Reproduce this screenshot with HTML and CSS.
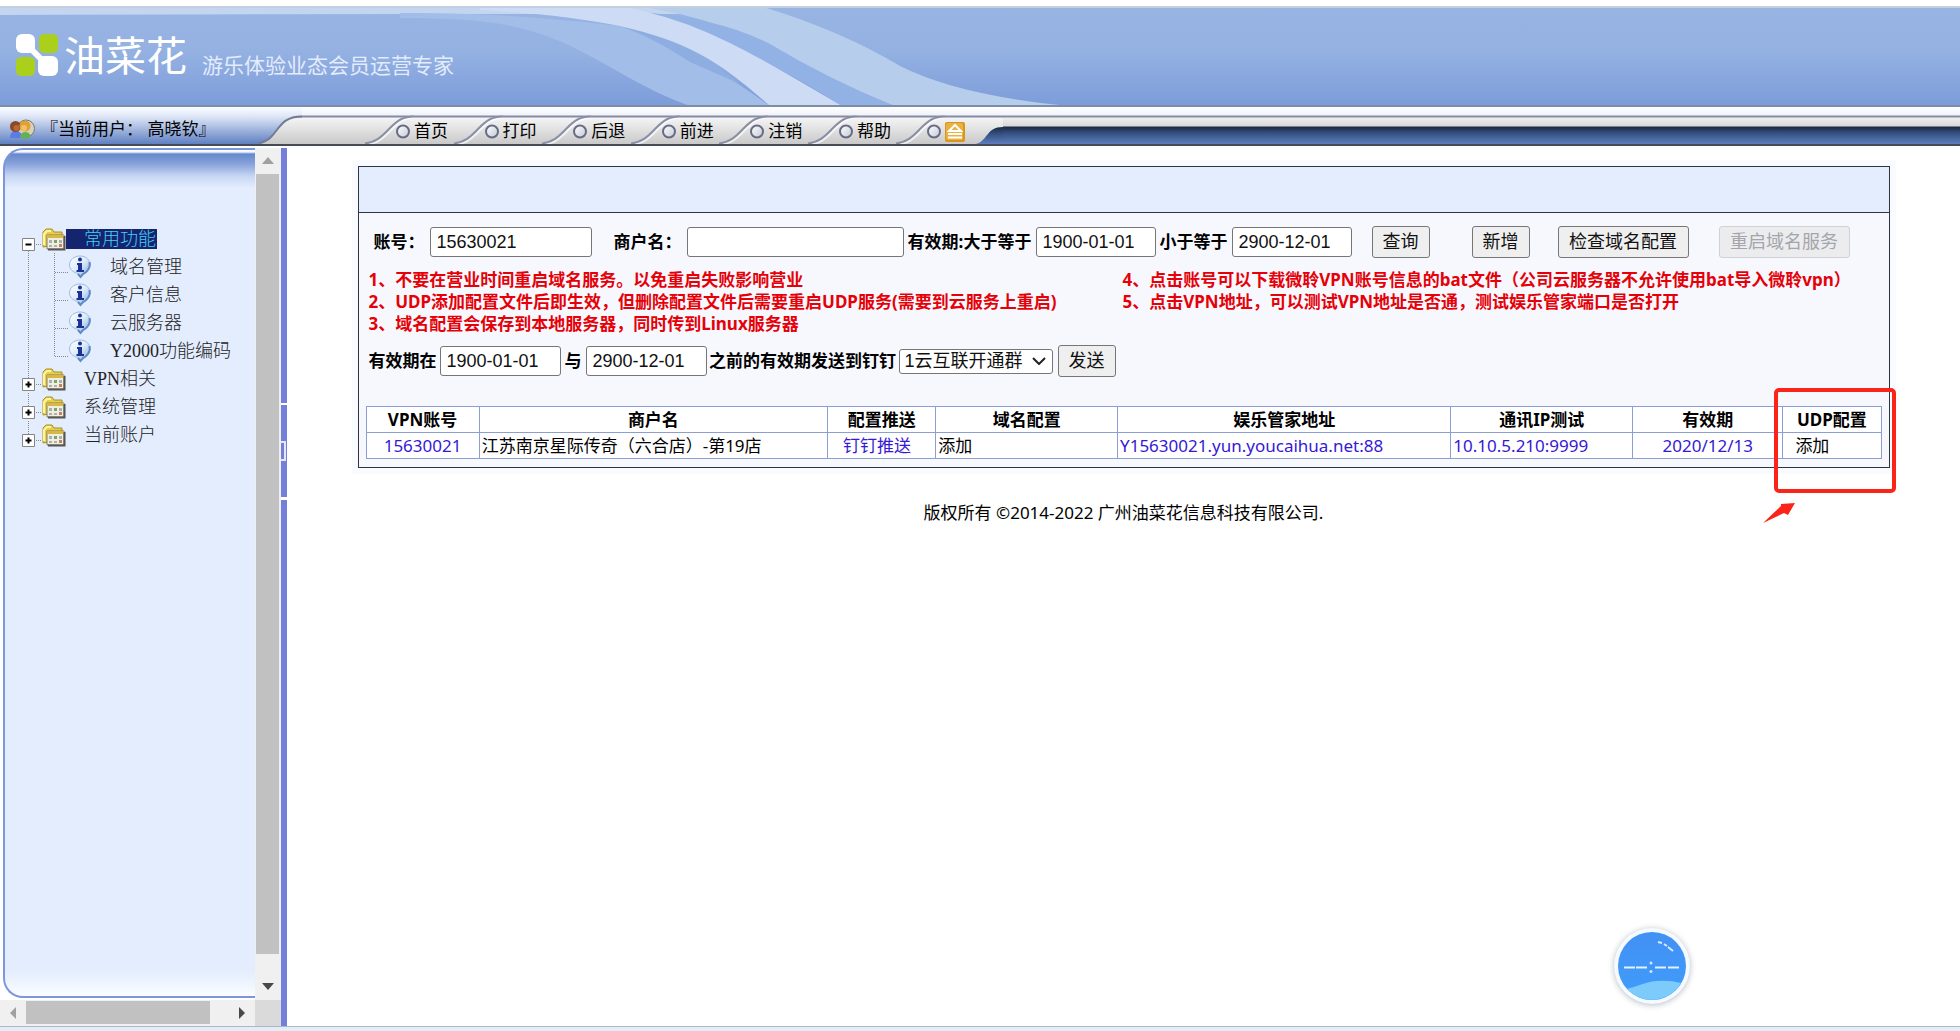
FILE: index.html
```html
<!DOCTYPE html>
<html lang="zh-CN">
<head>
<meta charset="utf-8">
<title>油菜花</title>
<link rel="stylesheet" href="styles.css">
</head>
<body>
<svg class="defs" width="0" height="0" aria-hidden="true">
  <defs>
    <linearGradient id="userBlue" x1="0" y1="0" x2="0" y2="37" gradientUnits="userSpaceOnUse"><stop offset="0" stop-color="#fbfcff"/><stop offset=".25" stop-color="#dfe7f6"/><stop offset=".6" stop-color="#a3b7de"/><stop offset="1" stop-color="#5f80c2"/></linearGradient>
    <linearGradient id="navy" x1="0" y1="0" x2="0" y2="1"><stop offset="0" stop-color="#1b2942"/><stop offset=".4" stop-color="#34507f"/><stop offset="1" stop-color="#5d7dbf"/></linearGradient>
    <linearGradient id="ball" x1="0" y1="0" x2="1" y2="1"><stop offset="0" stop-color="#fff"/><stop offset="1" stop-color="#c3c8d6"/></linearGradient>
    <linearGradient id="bubble" x1="0" y1="0" x2="1" y2="1"><stop offset="0" stop-color="#fff"/><stop offset=".5" stop-color="#dcebfa"/><stop offset="1" stop-color="#7fa6d8"/></linearGradient>
    <linearGradient id="water" x1="0" y1="0" x2="0" y2="1"><stop offset="0" stop-color="#4290f3"/><stop offset="1" stop-color="#3f9dfc"/></linearGradient>
    <symbol id="tab" viewBox="0 0 49 37"><path d="M0 36.500C12 35 17 29 25 21S38 9.500 50 9.500" fill="none" stroke="#fff" stroke-width="2" transform="translate(2 1)" opacity=".7"/><path d="M0 36.500C12 35 17 29 25 21S38 9.500 50 9.500" fill="none" stroke="#8a8fa6" stroke-width="2"/><circle cx="38" cy="24.500" r="6" fill="url(#ball)" stroke="#666c84" stroke-width="2"/></symbol>
    <symbol id="folder" viewBox="0 0 24 24"><path d="M1 20V5l3-3h6l2 3h8v12z" fill="#e8cf4a" stroke="#a8902c"/><path d="M2 18V7l3-3h4" fill="none" stroke="#fff3a0" stroke-width="2"/><path d="M5 8h17v14H5z" fill="#f0eedd" stroke="#7d7b58"/><path d="M5 8h17v3H5z" fill="#d9b64a"/><path d="M22.500 9v13.500H6" fill="none" stroke="#555" stroke-width="2"/><path d="M7 13h3v3H7zM12 13h3v3h-3zM17 13h3v3h-3zM7 18h3v2H7zM12 18h3v2h-3z" fill="#a9b0b8"/><path d="M12 13h3v3h-3z" fill="#74a868"/><path d="M17 17h3v3h-3z" fill="#cc7c68"/></symbol>
    <symbol id="info" viewBox="0 0 24 24"><path d="M12 1c6 0 10 4 10 9 0 4-3 7-7 8.500L12.500 22 9.500 18.500c-5-1.500-8-4.500-8-8.500C1.500 5 6 1 12 1z" fill="url(#bubble)" stroke="#9dbbe0"/><path d="M21.500 7c1.500 6-3 10.500-6.500 12l-2.500 3-2.500-3" fill="none" stroke="#5e8ac6" stroke-width="2"/><path d="M9 8h5v7h2v2H8.500v-2H10v-5H9z" fill="#1c3296"/><circle cx="12" cy="4.500" r="2" fill="#1c3296"/></symbol>
    <symbol id="minus" viewBox="0 0 24 28"><path d="M10.500 26v2M16 19.500h8" stroke="#888" stroke-dasharray="1 1"/><path d="M4.500 13.500h12v12h-12z" fill="#fff" stroke="#848484"/><path d="M7.500 19.500h6" stroke="#000" stroke-width="2"/></symbol>
    <symbol id="plus" viewBox="0 0 24 28"><path d="M10.500 0v13M16 19.500h8" stroke="#888" stroke-dasharray="1 1"/><path d="M4.500 13.500h12v12h-12z" fill="#fff" stroke="#848484"/><path d="M7.500 19.500h6M10.500 16.500v6" stroke="#000" stroke-width="2"/></symbol>
    <symbol id="trunk" viewBox="0 0 24 28"><path d="M10.500 0v28" stroke="#888" stroke-dasharray="1 1"/></symbol>
    <symbol id="branch" viewBox="0 0 26 28"><path d="M12.500 0v28M13 19.500h13" stroke="#888" stroke-dasharray="1 1"/></symbol>
    <symbol id="elbow" viewBox="0 0 26 28"><path d="M12.500 0v20M13 19.500h13" stroke="#888" stroke-dasharray="1 1"/></symbol>
  </defs>
</svg>

<header class="banner">
  <svg class="waves" viewBox="0 8 1200 97" width="1200" height="97" aria-hidden="true">
    <path d="M0 6H700V14H430Q200 14 0 15z" fill="#c4d5ef"/>
    <path d="M400 13Q500 12 620 26Q680 46 735 82Q755 95 770 106H690C640 88 610 64 562 42C520 24 480 18 400 18z" fill="#a2bde7"/>
    <path d="M622 27Q690 40 740 84L690 62Q650 36 622 27z" fill="#8eaee2"/>
    <path d="M640 6H760Q840 30 900 66Q960 96 1070 106H895Q850 92 800 66Q740 28 680 14z" fill="#b6cdec"/>
    <path d="M640 12Q720 18 770 44Q830 80 895 106H842Q740 40 640 12z" fill="#92b2e5"/>
    <path d="M480 6H620C700 22 740 46 842 106H770C720 62 690 42 620 26Q560 14 480 10z" fill="#cddcf4"/>
  </svg>
  <svg class="mark" viewBox="0 0 42 42" width="42" height="42" aria-hidden="true">
    <path d="M14 14L28 28" stroke="#fff" stroke-width="6"/>
    <rect width="19" height="19" rx="6" fill="#fff"/><rect x="23" width="19" height="19" rx="5" fill="#abd01b"/>
    <rect y="23" width="19" height="19" rx="5" fill="#abd01b"/><rect x="22" y="22" width="20" height="20" rx="6" fill="#fff"/>
  </svg>
  <span class="brand">油菜花</span>
  <span class="tagline">游乐体验业态会员运营专家</span>
</header>

<div class="toolbar">
  <div class="user">
    <svg viewBox="0 0 26 22" width="26" height="22" aria-hidden="true">
      <circle cx="17" cy="10.500" r="8.500" fill="#d8d3b8" stroke="#777"/>
      <path d="M1 20q0-7 6-7t6 7z" fill="#5a7be8"/><path d="M11 20q0-6 5-6t6 5q-3 2-6 2z" fill="#62b05c"/>
      <circle cx="6.500" cy="8.500" r="5.500" fill="#8b4a25"/><circle cx="16" cy="8" r="5.500" fill="#e0a032"/><circle cx="7.500" cy="10" r="3" fill="#b9683a"/><circle cx="15" cy="10" r="3" fill="#f2c069"/>
    </svg>
    <span>『当前用户： 高晓钦』</span>
  </div>
  <svg class="edge" viewBox="0 0 44 37" width="44" height="37" aria-hidden="true"><path d="M0 0H44V8.500C24 9 22 21 13 30Q8 36 0 37z" fill="url(#userBlue)"/><path d="M0 36.500Q8 35 13 30C22 21 24 9.500 44 9.500" fill="none" stroke="#737b92" stroke-width="2"/></svg>
  <nav class="menu">
    <a href="#"><svg width="49" height="37"><use href="#tab"/></svg>首页</a>
    <a href="#"><svg width="49" height="37"><use href="#tab"/></svg>打印</a>
    <a href="#"><svg width="49" height="37"><use href="#tab"/></svg>后退</a>
    <a href="#"><svg width="49" height="37"><use href="#tab"/></svg>前进</a>
    <a href="#"><svg width="49" height="37"><use href="#tab"/></svg>注销</a>
    <a href="#"><svg width="49" height="37"><use href="#tab"/></svg>帮助</a>
    <a href="#" aria-label="收起"><svg width="49" height="37"><use href="#tab"/></svg><svg class="eject" viewBox="0 0 20 20" width="20" height="20"><rect width="20" height="20" rx="2" fill="#d9961f"/><rect x="1" y="1" width="17" height="17" rx="2" fill="#eab040"/><path d="M10 3l6 6H4z" fill="none" stroke="#fff" stroke-width="2"/><path d="M3 12h14M3 15.500h14" stroke="#fff" stroke-width="2"/></svg></a>
  </nav>
  <svg class="edge" viewBox="0 0 27 37" width="27" height="37" aria-hidden="true"><path d="M0 37C12 34 10 20 27 20V37z" fill="url(#navy)"/></svg>
  <div class="trail"></div>
</div>

<div class="frames">
  <aside class="side">
    <div class="side-view">
      <div class="side-panel">
        <ul class="tree">
          <li><a href="#" class="node open"><svg width="24" height="28"><use href="#minus"/></svg><svg class="ico" width="24" height="24"><use href="#folder"/></svg><span class="label">常用功能</span></a>
            <ul>
              <li><a href="#" class="node leaf"><svg width="24" height="28"><use href="#trunk"/></svg><svg width="26" height="28"><use href="#branch"/></svg><svg class="ico" width="24" height="24"><use href="#info"/></svg><span class="label">域名管理</span></a></li>
              <li><a href="#" class="node leaf"><svg width="24" height="28"><use href="#trunk"/></svg><svg width="26" height="28"><use href="#branch"/></svg><svg class="ico" width="24" height="24"><use href="#info"/></svg><span class="label">客户信息</span></a></li>
              <li><a href="#" class="node leaf"><svg width="24" height="28"><use href="#trunk"/></svg><svg width="26" height="28"><use href="#branch"/></svg><svg class="ico" width="24" height="24"><use href="#info"/></svg><span class="label">云服务器</span></a></li>
              <li><a href="#" class="node leaf"><svg width="24" height="28"><use href="#trunk"/></svg><svg width="26" height="28"><use href="#elbow"/></svg><svg class="ico" width="24" height="24"><use href="#info"/></svg><span class="label">Y2000功能编码</span></a></li>
            </ul>
          </li>
          <li><a href="#" class="node"><svg width="24" height="28"><use href="#plus"/></svg><svg class="ico" width="24" height="24"><use href="#folder"/></svg><span class="label">VPN相关</span></a></li>
          <li><a href="#" class="node"><svg width="24" height="28"><use href="#plus"/></svg><svg class="ico" width="24" height="24"><use href="#folder"/></svg><span class="label">系统管理</span></a></li>
          <li><a href="#" class="node"><svg width="24" height="28"><use href="#plus"/></svg><svg class="ico" width="24" height="24"><use href="#folder"/></svg><span class="label">当前账户</span></a></li>
        </ul>
      </div>
      <div class="bar-v"><svg viewBox="0 0 26 26" width="26" height="26"><path d="M7 16h12l-6-7z" fill="#a0a0a0"/></svg><div class="thumb"></div><svg viewBox="0 0 26 26" width="26" height="26"><path d="M7 9h12l-6 7z" fill="#484848"/></svg></div>
    </div>
    <div class="bar-h"><svg viewBox="0 0 26 26" width="26" height="26"><path d="M16 7v12l-6-6z" fill="#a0a0a0"/></svg><div class="thumb"></div><svg viewBox="0 0 26 26" width="26" height="26"><path d="M10 7v12l6-6z" fill="#484848"/></svg><div class="corner"></div></div>
  </aside>
  <div class="splitter"><div class="grip"><i></i></div></div>

  <main class="content">
    <section class="panel">
      <div class="panel-head"></div>
      <div class="panel-body">
        <form class="search">
          <label for="acc">账号：</label><input id="acc" value="15630021">
          <label for="shop" class="shop">商户名：</label><input id="shop">
          <label for="from" class="mid">有效期:大于等于</label><input id="from" value="1900-01-01">
          <label for="to" class="mid">小于等于</label><input id="to" value="2900-12-01">
          <div class="actions"><button type="button" class="find">查询</button><button type="button" class="add">新增</button><button type="button" class="check">检查域名配置</button><button type="button" class="restart" disabled>重启域名服务</button></div>
        </form>
        <div class="notes">
          <p>1、不要在营业时间重启域名服务。以免重启失败影响营业<br>2、UDP添加配置文件后即生效，但删除配置文件后需要重启UDP服务(需要到云服务上重启)<br>3、域名配置会保存到本地服务器，同时传到Linux服务器</p>
          <p>4、点击账号可以下载微聆VPN账号信息的bat文件（公司云服务器不允许使用bat导入微聆vpn）<br>5、点击VPN地址，可以测试VPN地址是否通，测试娱乐管家端口是否打开</p>
        </div>
        <form class="send">
          <label for="s1">有效期在</label><input id="s1" value="1900-01-01">
          <label for="s2" class="mid">与</label><input id="s2" value="2900-12-01">
          <label for="grp" class="mid">之前的有效期发送到钉钉</label>
          <div class="select"><select id="grp"><option>1云互联开通群</option></select><svg viewBox="0 0 14 8" width="14" height="8" aria-hidden="true"><path d="M1 1l6 6 6-6" fill="none" stroke="#222" stroke-width="2"/></svg></div>
          <button type="button">发送</button>
        </form>
        <div class="grid-wrap">
          <table class="grid">
            <colgroup><col class="c1"><col class="c2"><col class="c3"><col class="c4"><col class="c5"><col class="c6"><col class="c7"><col class="c8"></colgroup>
            <thead><tr><th>VPN账号</th><th>商户名</th><th>配置推送</th><th>域名配置</th><th>娱乐管家地址</th><th>通讯IP测试</th><th>有效期</th><th>UDP配置</th></tr></thead>
            <tbody><tr><td class="center"><a href="#">15630021</a></td><td>江苏南京星际传奇（六合店）-第19店</td><td class="push"><a href="#">钉钉推送</a></td><td>添加</td><td><a href="#">Y15630021.yun.youcaihua.net:88</a></td><td><a href="#">10.10.5.210:9999</a></td><td class="center"><a href="#">2020/12/13</a></td><td class="udp">添加</td></tr></tbody>
          </table>
          <div class="callout"></div>
          <svg class="arrow" viewBox="0 0 32 22" width="32" height="22" aria-hidden="true"><path d="M0 21L18 4 18 2 32 1 25 13 21 11z" fill="#fb2418"/></svg>
        </div>
      </div>
    </section>
    <p class="copyright">版权所有 ©2014-2022 广州油菜花信息科技有限公司.</p>
  </main>
</div>
<footer class="status"></footer>

<div class="clock">
  <svg viewBox="0 0 68 68" width="68" height="68" aria-hidden="true">
    <circle cx="34" cy="34" r="34" fill="url(#water)"/>
    <path d="M9 57C20 54 28 50 38 49Q52 48 63 51A34 34 0 0 1 9 57z" fill="#7ccbfb"/>
    <path d="M6 35.500h11M18 35.500h11M37 35.500h11M50 35.500h11" stroke="#e4f2ff" stroke-width="2"/>
    <circle cx="33" cy="31" r="1.500" fill="#cfe6ff"/><circle cx="33" cy="39.500" r="1.500" fill="#cfe6ff"/>
    <path d="M40 10l4 1M46 12l3 2M50 15l5 4" stroke="#d6eaff" stroke-width="2"/>
  </svg>
</div>
</body>
</html>
```
FILE: styles.css
```css
* { box-sizing: border-box; }

body {
  margin: 0;
  padding-top: 6px;
  min-height: 100vh;
  display: flex;
  flex-direction: column;
  background: #fff;
  color: #000;
  font: 17px/22px "Noto Sans", "Noto Sans CJK SC", sans-serif;
}

a { color: inherit; text-decoration: none; }
ul { list-style: none; margin: 0; padding: 0; }
p { margin: 0; }
svg { display: block; flex: none; }
.defs { position: absolute; }

/* banner */
.banner {
  position: relative;
  height: 101px;
  display: flex;
  align-items: center;
  padding: 0 0 4px 16px;
  color: #fff;
  white-space: nowrap;
  background: linear-gradient(#97b4e3 0, #94b1e2 45%, #7d9dda 100%);
  border-top: 2px solid #c3cfdf;
  border-bottom: 2px solid #7d8da8;
}
.waves { position: absolute; left: 0; top: 0; }
.mark, .brand, .tagline { position: relative; }
.brand {
  margin-left: 6px;
  font-size: 41px;
  line-height: 60px;
}
.tagline {
  margin: 20px 0 0 15px;
  font-size: 21px;
  line-height: 30px;
  color: #e3ecfb;
}

/* toolbar */
.toolbar {
  display: flex;
  height: 39px;
  border-bottom: 2px solid #474b58;
  background: linear-gradient(#fff 0, #f1f3fa 8px, #858ca2 9px, #858ca2 10px, #f4f4f4 11px, #c9c9c9 37px);
}
.user {
  width: 258px;
  display: flex;
  align-items: center;
  gap: 6px;
  padding: 6px 0 0 9px;
  white-space: pre;
  background: linear-gradient(#fbfcff 0, #dfe7f6 25%, #a3b7de 60%, #5f80c2 100%);
}
.menu {
  display: flex;
  width: 683px;
  margin-right: -9px;
  padding-left: 63px;
}
.menu a {
  flex: 1;
  display: flex;
  align-items: flex-start;
  line-height: 48px;
  height: 37px;
  white-space: nowrap;
}
.menu .eject { margin-top: 15px; }
.trail {
  flex: 1;
  background: linear-gradient(transparent 0, transparent 11px, #eee 11px, #d8d8d8 19px, #1b2942 20px, #34507f 26px, #5d7dbf 37px);
}

/* frames */
.frames { flex: 1; display: flex; }
.side {
  width: 281px;
  display: flex;
  flex-direction: column;
  padding-top: 2px;
}
.side-view { flex: 1; display: flex; }
.side-panel {
  flex: 1;
  margin: 0 0 2px 3px;
  border: 2px solid #7d95dc;
  border-right: 0;
  border-radius: 20px 0 0 20px;
  padding: 75px 0 0 13px;
  background: linear-gradient(#fff 0, #f0f5ff 2px, #6688cc 4px, #88a3da 14px, #c6d6f3 26px, #e4edfe 38px, #e3edfe calc(100% - 26px), #fafcff 100%);
}
.bar-v {
  width: 26px;
  display: flex;
  flex-direction: column;
  background: #f0f0f0;
}
.bar-v .thumb { flex: 1; margin: 0 2px 20px 1px; background: #c1c1c1; }
.bar-h { display: flex; height: 26px; background: #f0f0f0; }
.bar-h .thumb { flex: 1; margin: 1px 19px 2px 0; background: #c1c1c1; }
.corner { width: 26px; background: #dadada; }

.splitter {
  width: 6px;
  margin-top: 2px;
  padding-top: 255px;
  background: #747edb;
}
.grip {
  height: 97px;
  display: flex;
  align-items: center;
  border-top: 2px solid #fff;
  border-bottom: 3px solid #fff;
}
.grip i { width: 5px; height: 20px; border: 2px solid #e3e7fb; border-left: 0; }

.tree {
  font-family: "Liberation Serif", "Noto Sans CJK SC", serif;
  font-size: 18px;
  font-weight: 300;
  color: #222;
}
.node { display: flex; height: 28px; align-items: center; white-space: nowrap; }
.node .label { padding-left: 18px; line-height: 20px; }
.node.open .label { padding-right: 1px; background: #14246e; color: #45cdf5; }

/* content */
.content { flex: 1; padding-top: 20px; }
.panel {
  width: 92%;
  max-width: 1532px;
  margin: 0 auto;
  border: 1px solid #2f3540;
  outline: 6px solid #f9fbff;
  background: #f6f8fe;
}
.panel-head { height: 46px; background: #e4edfd; border-bottom: 1px solid #2f3540; }
.panel-body { padding: 13px 7px 8px; }

label { font-weight: 700; white-space: nowrap; }
.mid { text-align: center; }
input, select, button {
  font: 18px/22px "Liberation Sans", "Noto Sans CJK SC", sans-serif;
  color: #111;
  border: 1px solid #767676;
  border-radius: 3px;
  min-width: 0;
}
input { height: 30px; padding: 0 6px; background: #fff; }
button { height: 32px; padding: 0; background: #efefef; white-space: nowrap; }
button:disabled { color: #a3a5aa; border-color: #d0d1d5; background: #ececef; }

.select { display: grid; align-items: center; }
.select select {
  grid-area: 1 / 1;
  width: 100%;
  height: 25px;
  padding: 0 5px;
  appearance: none;
  background: #fff;
}
.select svg { grid-area: 1 / 1; justify-self: end; margin-right: 7px; pointer-events: none; }

.search {
  display: grid;
  grid-template-columns: 56px 162px 95px 217px 132px 120px 76px 120px auto;
  align-items: center;
  padding-left: 8px;
}
.shop { padding-left: 22px; }
.actions { display: flex; padding-left: 20px; }
.find, .add, .send button { width: 58px; }
.add { margin-left: 42px; }
.check, .restart { width: 131px; }
.check { margin-left: 28px; }
.restart { margin-left: 30px; }

.notes {
  display: grid;
  grid-template-columns: 754px auto;
  padding: 11px 3px 0;
  color: #e60008;
  font-weight: 700;
  white-space: nowrap;
}
.send {
  display: grid;
  grid-template-columns: 71px 121px 25px 121px 192px 154px 63px;
  align-items: center;
  padding: 10px 3px 29px;
}
.send button { margin-left: 5px; }

.grid-wrap { position: relative; }
.grid {
  width: 100%;
  table-layout: fixed;
  border-collapse: collapse;
  background: #fff;
}
.grid th, .grid td {
  height: 26px;
  padding: 0 2px;
  border: 1px solid #8c9fd4;
  text-align: left;
  white-space: nowrap;
}
.grid th, .grid .center { text-align: center; }
.grid .push { padding-left: 15px; }
.grid a { color: #3618d6; }
.grid .udp { padding-left: 12px; }
.c1 { width: 113px; }
.c2 { width: 23%; }
.c3 { width: 108px; }
.c4 { width: 12%; }
.c5 { width: 22%; }
.c6 { width: 12%; }
.c7 { width: 150px; }
.c8 { width: 98px; }

.callout {
  position: absolute;
  top: -18px;
  right: -14px;
  width: 122px;
  height: 105px;
  border: 4px solid #fb2418;
  border-radius: 5px;
}
.arrow { position: absolute; top: 96px; right: 87px; }

.copyright { margin-top: 34px; text-align: center; }

.status { height: 5px; background: #e4ecf6; border-top: 1px solid #aab6ca; }

.clock {
  position: fixed;
  right: 270px;
  bottom: 27px;
  padding: 4px;
  border-radius: 50%;
  background: #f4faff;
  box-shadow: 0 1px 6px #b8bcc4;
}
```
